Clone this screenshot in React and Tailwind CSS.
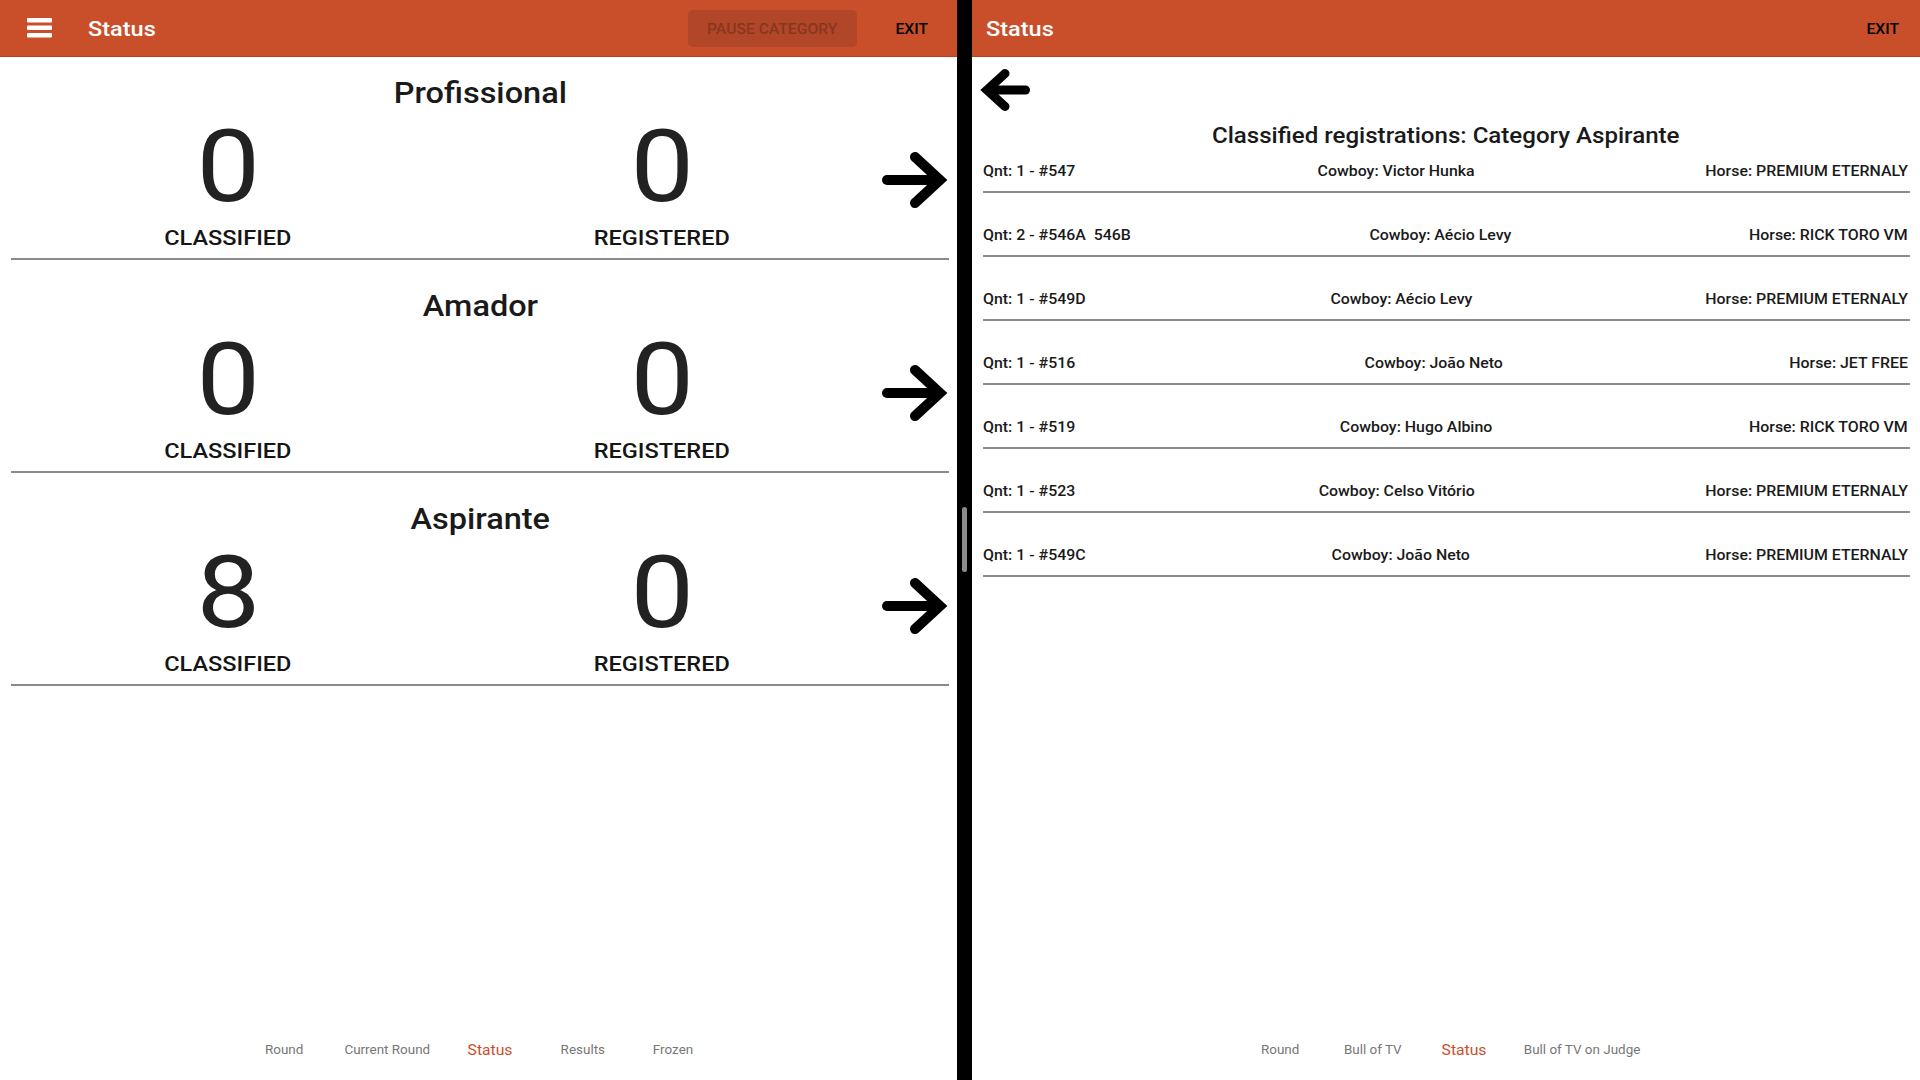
import React from "react";

const T = ({ className = "", o = "origin-center", children }) => (
  <span className={`inline-block scale-x-[1.12] ${o} ${className}`}>{children}</span>
);

const ArrowRight = () => (
  <svg width="66" height="56" viewBox="0 0 66 56" fill="none" stroke="#000" strokeWidth="10">
    <path d="M5 28H55" strokeLinecap="round" />
    <path d="M33 5L58 28L33 51" strokeLinecap="round" strokeLinejoin="miter" />
  </svg>
);

const ArrowLeft = () => (
  <svg width="50" height="42" viewBox="0 0 50 42" fill="none" stroke="#000" strokeWidth="9">
    <path d="M45.5 21H10" strokeLinecap="round" />
    <path d="M25 4.5L7 21L25 37.5" strokeLinecap="round" strokeLinejoin="miter" />
  </svg>
);

const Hamburger = () => (
  <svg width="25" height="20" viewBox="0 0 25 20" fill="#fff">
    <rect x="0" y="0" width="25" height="4.5" rx="1" />
    <rect x="0" y="7.5" width="25" height="4.5" rx="1" />
    <rect x="0" y="15" width="25" height="4.5" rx="1" />
  </svg>
);

const sections = [
  { name: "Profissional", classified: 0, registered: 0 },
  { name: "Amador", classified: 0, registered: 0 },
  { name: "Aspirante", classified: 8, registered: 0 },
];

const rows = [
  ["Qnt: 1 - #547", "Cowboy: Victor Hunka", "Horse: PREMIUM ETERNALY"],
  ["Qnt: 2 - #546A  546B", "Cowboy: Aécio Levy", "Horse: RICK TORO VM"],
  ["Qnt: 1 - #549D", "Cowboy: Aécio Levy", "Horse: PREMIUM ETERNALY"],
  ["Qnt: 1 - #516", "Cowboy: João Neto", "Horse: JET FREE"],
  ["Qnt: 1 - #519", "Cowboy: Hugo Albino", "Horse: RICK TORO VM"],
  ["Qnt: 1 - #523", "Cowboy: Celso Vitório", "Horse: PREMIUM ETERNALY"],
  ["Qnt: 1 - #549C", "Cowboy: João Neto", "Horse: PREMIUM ETERNALY"],
];

const Stat = ({ value, label }) => (
  <div className="w-[434px] flex flex-col items-center">
    <div className="h-[100px] leading-[100px] text-[101px] text-[#222222]">
      <T>{value}</T>
    </div>
    <div className="mt-[9px] h-[24px] leading-[24px] text-[21px] font-medium text-[#151515]">
      <T>{label}</T>
    </div>
  </div>
);

function LeftPanel() {
  return (
    <div className="w-[957px] shrink-0 h-full flex flex-col">
      <header className="h-[57px] shrink-0 bg-[#c84f2a] border-b border-[#b4421f] flex items-center pl-[27px] pr-[29px]">
        <Hamburger />
        <div className="ml-[36px] mt-[2px] text-[21px] font-medium text-white leading-none">
          <T o="origin-left">Status</T>
        </div>
        <div className="flex-1" />
        <div className="w-[169px] h-[37px] rounded-[5px] bg-[#b14628] flex items-center justify-center">
          <T className="text-[14px] font-medium text-[#873720] mt-[2px]">PAUSE CATEGORY</T>
        </div>
        <div className="ml-[42px] mt-[2px] text-[14px] font-medium text-black leading-none">
          <T o="origin-right">EXIT</T>
        </div>
      </header>
      <main className="flex-1 pt-[20px] pl-[11px] pr-[8px] flex flex-col gap-[30px]">
        {sections.map((s) => (
          <section key={s.name} className="flex flex-col">
            <div className="h-[32px] leading-[32px] text-[29px] font-medium text-center text-[#1a1a1a]">
              <T>{s.name}</T>
            </div>
            <div className="mt-[8px] flex items-start">
              <Stat value={s.classified} label="CLASSIFIED" />
              <Stat value={s.registered} label="REGISTERED" />
              <div className="ml-[3px] mt-[35px]">
                <ArrowRight />
              </div>
            </div>
            <div className="mt-[8px] h-[2px] bg-[#8a8a8a]" />
          </section>
        ))}
      </main>
      <nav className="h-[62px] shrink-0 pt-[2px] flex items-center justify-center text-[12px] text-[#777777]">
        <div className="w-[100px] text-center"><T>Round</T></div>
        <div className="w-[106px] text-center"><T>Current Round</T></div>
        <div className="w-[100px] text-center text-[14px] text-[#c84f2a]"><T>Status</T></div>
        <div className="w-[84px] text-center"><T>Results</T></div>
        <div className="w-[98px] text-center"><T>Frozen</T></div>
      </nav>
    </div>
  );
}

function RightPanel() {
  return (
    <div className="flex-1 h-full flex flex-col">
      <header className="h-[57px] shrink-0 bg-[#c84f2a] border-b border-[#b4421f] flex items-center pl-[14px] pr-[21px]">
        <div className="mt-[2px] text-[21px] font-medium text-white leading-none">
          <T o="origin-left">Status</T>
        </div>
        <div className="flex-1" />
        <div className="mt-[2px] text-[14px] font-medium text-black leading-none">
          <T o="origin-right">EXIT</T>
        </div>
      </header>
      <main className="flex-1 flex flex-col">
        <div className="mt-[12px] ml-[8px]">
          <ArrowLeft />
        </div>
        <div className="mt-[11px] h-[28px] leading-[28px] text-[21.5px] font-medium text-center text-[#1a1a1a]">
          <T>Classified registrations: Category Aspirante</T>
        </div>
        <div className="mt-[11px] pl-[11px] pr-[10px] flex flex-col">
          {rows.map((r, i) => (
            <div key={i} className={i === 0 ? "" : "pt-[32px]"}>
              <div className="h-[20px] leading-[20px] pr-[2px] flex justify-between text-[14.2px] font-medium text-[#1a1a1a] whitespace-pre">
                <T o="origin-left">{r[0]}</T>
                <T>{r[1]}</T>
                <T o="origin-right">{r[2]}</T>
              </div>
              <div className="mt-[10px] h-[2px] bg-[#8a8a8a]" />
            </div>
          ))}
        </div>
      </main>
      <nav className="h-[62px] shrink-0 pt-[2px] flex items-center justify-center text-[12px] text-[#777777]">
        <div className="w-[90px] text-center"><T>Round</T></div>
        <div className="w-[94px] text-center"><T>Bull of TV</T></div>
        <div className="w-[89px] text-center text-[14px] text-[#c84f2a]"><T>Status</T></div>
        <div className="w-[148px] text-center"><T>Bull of TV on Judge</T></div>
      </nav>
    </div>
  );
}

export default function App() {
  return (
    <div className="w-[1920px] h-[1080px] flex overflow-hidden bg-white font-['Roboto',sans-serif]">
      <LeftPanel />
      <div className="w-[15px] shrink-0 h-full bg-black relative">
        <div className="absolute left-[5px] top-[507px] w-[5px] h-[65px] rounded-full bg-[#8c8c8c]" />
      </div>
      <RightPanel />
    </div>
  );
}
